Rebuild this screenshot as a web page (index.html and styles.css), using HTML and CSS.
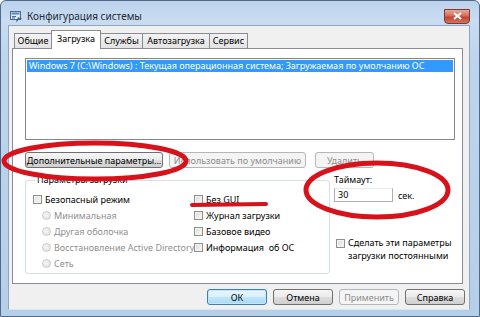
FILE: index.html
```html
<!DOCTYPE html>
<html lang="ru">
<head>
<meta charset="utf-8">
<title>Конфигурация системы</title>
<link rel="stylesheet" href="styles.css">
</head>
<body>
<div class="window">
  <div class="titlebar">
    <svg class="app-icon" width="12" height="12" viewBox="0 0 12 12">
      <rect x="0.5" y="1.5" width="10" height="8" fill="#dfe9f5" stroke="#4a6a90"/>
      <rect x="1.5" y="2.5" width="8" height="2" fill="#5a86bd"/>
      <path d="M2 6.5h4M2 8h3" stroke="#4a6a90" stroke-width="1"/>
      <path d="M6.5 11.5l2-3.5 3 1" stroke="#2f5f96" stroke-width="1.3" fill="none"/>
    </svg>
    <span class="title">Конфигурация системы</span>
    <div class="close">
      <svg width="9" height="8" viewBox="0 0 9 8"><path d="M1 1l7 6M8 1l-7 6" stroke="#fff" stroke-width="2"/></svg>
    </div>
  </div>
  <div class="client">
    <div class="tabs">
      <div class="tab w1">Общие</div>
      <div class="tab w2 active">Загрузка</div>
      <div class="tab w3">Службы</div>
      <div class="tab w4">Автозагрузка</div>
      <div class="tab w5">Сервис</div>
    </div>
    <div class="panel">
      <div class="listbox">
        <div class="row selected">Windows 7 (C:\Windows) : Текущая операционная система; Загружаемая по умолчанию ОС</div>
      </div>
      <div class="btnrow">
        <button class="btn b-adv">Дополнительные параметры...</button>
        <button class="btn b-def" disabled>Использовать по умолчанию</button>
        <button class="btn b-del" disabled>Удалить</button>
      </div>
      <div class="lower">
        <fieldset class="group">
          <legend>Параметры загрузки</legend>
          <div class="grid">
            <div class="col">
              <div class="opt"><span class="cb"></span>Безопасный режим</div>
              <div class="opt radio-opt"><span class="rb"></span>Минимальная</div>
              <div class="opt radio-opt"><span class="rb"></span>Другая оболочка</div>
              <div class="opt radio-opt"><span class="rb"></span>Восстановление Active Directory</div>
              <div class="opt radio-opt"><span class="rb"></span>Сеть</div>
            </div>
            <div class="col">
              <div class="opt"><span class="cb"></span>Без GUI</div>
              <div class="opt"><span class="cb"></span>Журнал загрузки</div>
              <div class="opt"><span class="cb"></span>Базовое видео</div>
              <div class="opt"><span class="cb"></span>Информация&nbsp; об ОС</div>
            </div>
          </div>
        </fieldset>
        <div class="side">
          <div class="label">Таймаут:</div>
          <div class="timeout"><span class="input">30</span><span class="unit">сек.</span></div>
          <div class="opt persist"><span class="cb"></span><span>Сделать эти параметры<br>загрузки постоянными</span></div>
        </div>
      </div>
    </div>
    <div class="footer">
      <button class="btn fbtn default">ОК</button>
      <button class="btn fbtn">Отмена</button>
      <button class="btn fbtn" disabled>Применить</button>
      <button class="btn fbtn">Справка</button>
    </div>
  </div>
  <svg class="marks" width="480" height="317" viewBox="0 0 480 317">
    <ellipse cx="95" cy="161" rx="91" ry="18" fill="none" stroke="#d8121b" stroke-width="5"/>
    <ellipse cx="377" cy="190" rx="71" ry="27" fill="none" stroke="#d8121b" stroke-width="5"/>
    <path d="M192 205 L266 204" stroke="#d8121b" stroke-width="4" stroke-linecap="round"/>
  </svg>
</div>
</body>
</html>
```
FILE: styles.css
```css
* { box-sizing: border-box; }
html, body { margin: 0; padding: 0; }
body {
  width: 480px;
  height: 317px;
  overflow: hidden;
  font-family: "Noto Sans", "Liberation Sans", sans-serif;
  font-size: 9px;
  color: #000;
  background: #fff;
}
.window {
  position: relative;
  width: 480px;
  height: 317px;
  border: 1px solid #51698a;
  border-radius: 6px 6px 0 0;
  background: linear-gradient(180deg, #bcd3ec 0px, #c9dcf1 20px, #bed4ec 60px, #b6cfe9 100%);
  display: flex;
  flex-direction: column;
}
.titlebar {
  height: 24px;
  padding: 6px 9px 0 9px;
  display: flex;
  align-items: center;
}
.app-icon { flex: none; }
.title {
  margin-left: 5px;
  font-size: 10px;
  color: #1e2a38;
}
.close {
  margin-left: auto;
  width: 26px;
  height: 15px;
  border: 1px solid #7a3a32;
  border-radius: 0 0 4px 4px;
  background: linear-gradient(180deg, #e7a89c 0%, #d36a59 45%, #c24430 55%, #d6735e 100%);
  display: flex;
  align-items: center;
  justify-content: center;
}
.client {
  flex: 1;
  margin: 0 9px 6px 7px;
  padding: 4px 6px 0 3px;
  background: #f0f0f0;
  border: 1px solid #8ea6c2;
  border-bottom-color: #dce6f2;
  display: flex;
  flex-direction: column;
}
.tabs {
  display: flex;
  align-items: flex-end;
  height: 18px;
  margin-left: 2px;
  position: relative;
  z-index: 1;
}
.tab {
  height: 15px;
  border: 1px solid #898c95;
  border-bottom: none;
  background: linear-gradient(180deg, #f3f3f3, #e3e3e3);
  font-size: 9px;
  line-height: 14px;
  text-align: center;
  margin-left: -1px;
  white-space: nowrap;
}
.tab:first-child { margin-left: 0; }
.tab.active {
  height: 19px;
  margin-bottom: -1px;
  background: #fff;
  line-height: 15px;
}
.w1 { width: 38px; }
.w2 { width: 50px; }
.w3 { width: 43px; }
.w4 { width: 68px; }
.w5 { width: 39px; }
.panel {
  height: 236px;
  border: 1px solid #898c95;
  background: #fff;
  padding: 9px 0 0 12px;
}
.listbox {
  width: 430px;
  height: 82px;
  border: 1px solid #828790;
  padding: 1px;
  background: #fff;
}
.row {
  height: 12px;
  line-height: 12px;
  padding-left: 2px;
  white-space: nowrap;
  overflow: hidden;
  font-size: 9px;
}
.row.selected { background: #3399ff; color: #fff; }
.btnrow {
  display: flex;
  margin-top: 12px;
}
.btn {
  height: 16px;
  padding: 0;
  border: 1px solid #707070;
  border-radius: 3px;
  background: linear-gradient(180deg, #f6f6f6 0%, #ebebeb 48%, #dddddd 52%, #cfcfcf 100%);
  font-family: inherit;
  font-size: 9px;
  color: #000;
  white-space: nowrap;
}
.btn:disabled {
  border-color: #b3b7ba;
  background: #f4f4f4;
  color: #8d8d8d;
}
.b-adv { width: 138px; }
.b-def { width: 137px; margin-left: 6px; }
.b-del { width: 59px; margin-left: 9px; }
.lower {
  display: flex;
  margin-top: 6px;
}
.group {
  width: 305px;
  height: 100px;
  margin: 0;
  padding: 5px 0 0 7px;
  border: 1px solid #d5dfe5;
  border-radius: 3px;
}
.group legend {
  padding: 0 2px;
  margin-left: 2px;
  line-height: 12px;
  font-size: 9px;
}
.grid {
  display: grid;
  grid-template-columns: 161px 1fr;
}
.opt {
  height: 16px;
  display: flex;
  align-items: center;
  white-space: nowrap;
}
.cb {
  flex: none;
  width: 9px;
  height: 9px;
  margin-right: 3px;
  border: 1px solid #8e8f8f;
  background: linear-gradient(135deg, #dcdcdc, #f7f7f7);
  box-shadow: inset 0 0 0 1px #f4f4f4;
}
.radio-opt { padding-left: 9px; color: #8f8f8f; }
.rb {
  flex: none;
  width: 9px;
  height: 9px;
  margin-right: 3px;
  border-radius: 50%;
  border: 1px solid #c9c9c9;
  background: radial-gradient(circle at 40% 40%, #f6f6f6, #dedede);
}
.side {
  margin-left: 4px;
  display: flex;
  flex-direction: column;
}
.label { line-height: 12px; height: 12px; }
.timeout {
  display: flex;
  align-items: center;
  margin-top: 2px;
}
.input {
  width: 59px;
  height: 14px;
  border: 1px solid #abadb3;
  border-top-color: #e3e9ef;
  background: #fff;
  line-height: 12px;
  padding-left: 3px;
}
.unit { margin-left: 5px; }
.persist {
  margin-top: 35px;
  margin-left: 2px;
  height: auto;
  align-items: flex-start;
  line-height: 12.5px;
}
.persist .cb { margin-top: 2px; }
.footer {
  display: flex;
  justify-content: flex-end;
  gap: 6px;
  padding-top: 5px;
  margin-right: -2px;
}
.fbtn { width: 60px; }
.fbtn.default {
  border-color: #3c7fb1;
  background: linear-gradient(180deg, #eaf6fd 0%, #d9f0fc 48%, #bee6fd 52%, #a7d9f5 100%);
  box-shadow: 0 0 0 1px #c6e5f7 inset;
}
.marks {
  position: absolute;
  left: -1px;
  top: -1px;
  pointer-events: none;
}
```
